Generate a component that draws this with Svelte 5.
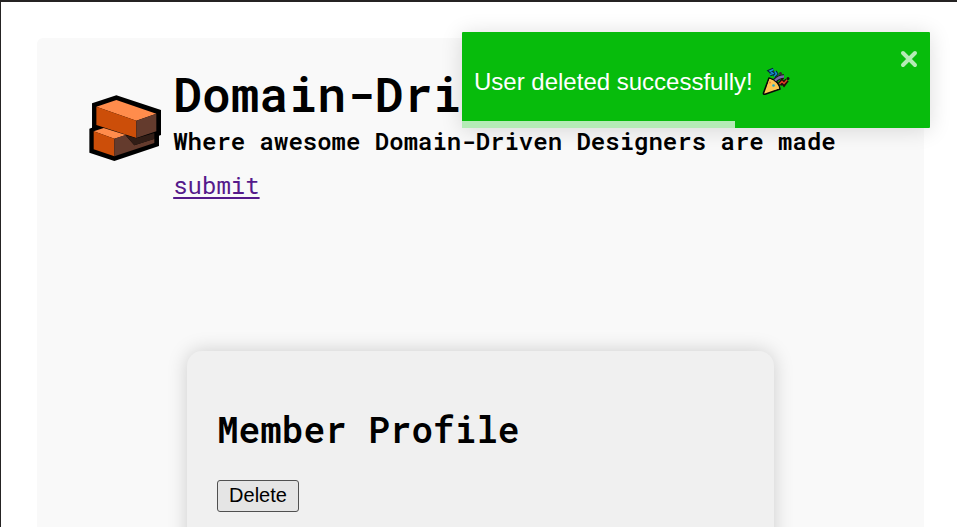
<script>
  let progress = $state(58.3);
  let open = $state(true);
</script>

<div class="page">
  <main class="panel">
    <header>
      <svg class="logo" viewBox="26 29 218 199" aria-hidden="true">
        <path fill="#000" d="M108 30 243 74V149L236 151V182L102 227 27 202V130L35 127V54Z" />
        <path fill="#ff8c4c" d="M48 64 108 44 228 85 168 106Z" />
        <path fill="#cc4e09" d="M48 64 168 106V158L48 119Z" />
        <path fill="#643b2d" d="M168 106 228 85V138L168 158Z" />
        <path fill="#ff8c4c" d="M40 138 70 128 137 149 102 160Z" />
        <path fill="#cc4e09" d="M40 138 102 160V213L40 192Z" />
        <path fill="#643b2d" d="M102 160 135 149 162 180 222 160V173L102 213Z" />
        <path fill="#311d16" d="M135 149 168 159 222 143V161L162 180Z" />
      </svg>
      <div class="titles">
        <h1>Domain-Dri</h1>
        <h3>Where awesome Domain-Driven Designers are made</h3>
        <a href="#submit">submit</a>
      </div>
    </header>

    <section class="card">
      <h2>Member Profile</h2>
      <button class="delete">Delete</button>
    </section>
  </main>

  {#if open}
    <div class="toast" role="alert">
      <div class="message">
        <span>User deleted successfully!</span>
        <svg class="party" viewBox="0 0 30 30" aria-hidden="true">
          <path d="M8 11 2.5 26Q2.2 27.6 4 27.2L19 22Q18 14 8 11Z" fill="#ffc551" stroke="#080808" stroke-width="1.6" stroke-linejoin="round" />
          <path d="M9 7.5 12 6.5 9 4 12.5 2.5M13 9.5 15.5 7 14 4.5" fill="none" stroke="#08243a" stroke-width="3.6" />
          <path d="M9 7.5 12 6.5 9 4 12.5 2.5M13 9.5 15.5 7 14 4.5" fill="none" stroke="#168fce" stroke-width="1.5" />
          <path d="M14 13.5Q18 9.5 23 9.5" fill="none" stroke="#181018" stroke-width="4.6" />
          <path d="M14 13.5Q18 9.5 23 9.5" fill="none" stroke="#7966ad" stroke-width="2.4" />
          <path d="M18.5 17.5 21 14.5 23 17 26 13" fill="none" stroke="#210d0b" stroke-width="4.4" />
          <path d="M18.5 17 21 14.5 23 16.5 26 13" fill="none" stroke="#df3f24" stroke-width="1.5" />
          <path d="M8.5 11.8Q15.5 14 18.2 21.5L12 23 6 20Z" fill="#ffc551" />
          <circle cx="19.5" cy="6.5" r="1.5" fill="#3b2630" />
          <circle cx="27" cy="11.5" r="1.5" fill="#15120c" />
          <circle cx="12.5" cy="18.5" r="1.3" fill="#20a6cf" />
          <circle cx="9" cy="15.5" r="0.9" fill="#f07942" />
        </svg>
      </div>
      <button class="close" aria-label="Close" onclick={() => (open = false)}>
        <svg viewBox="0 0 18 18"><path d="M3 3 15 15M15 3 3 15" /></svg>
      </button>
      <div class="bar" style="width: {progress}%"></div>
    </div>
  {/if}
</div>

<style>
  .page {
    box-sizing: border-box;
    width: 957px;
    height: 527px;
    overflow: hidden;
    position: relative;
    background: #fff;
    border-top: 2px solid #252323;
    border-left: 1px solid #252323;
    padding: 36px 33px 0 36px;
    font-family: "Roboto Mono", "DejaVu Sans Mono", monospace;
    color: #000;
  }
  .panel {
    box-sizing: border-box;
    height: 560px;
    background: #f9f9f9;
    border-radius: 6px;
    padding: 26px 52px 0;
  }
  header {
    display: flex;
    height: 287px;
  }
  .logo {
    width: 72.7px;
    height: 66.3px;
    margin-top: 31px;
    margin-left: -0.3px;
    flex: none;
  }
  .titles {
    margin-left: 11.8px;
    white-space: nowrap;
  }
  h1, h2, h3 {
    margin: 0;
    font-weight: 600;
  }
  h1 {
    font-size: 48px;
    line-height: 60px;
  }
  h3 {
    margin-top: 1px;
    font-size: 24px;
    line-height: 32px;
  }
  a {
    display: inline-block;
    margin-top: 12px;
    font-size: 24px;
    font-weight: 400;
    line-height: 32px;
    color: #551a8b;
    text-decoration-thickness: 2px;
    text-underline-offset: 3px;
  }
  .card {
    box-sizing: border-box;
    width: 587px;
    height: 300px;
    margin-left: 98px;
    padding: 54px 30px 0;
    background: #f0f0f0;
    border-radius: 15px;
    box-shadow: 0 0 20px rgba(0, 0, 0, 0.18);
  }
  h2 {
    font-size: 36px;
    line-height: 48px;
  }
  .delete {
    display: block;
    box-sizing: border-box;
    width: 82px;
    height: 32px;
    margin-top: 27px;
    padding: 0 0 1px;
    border: 1px solid #505050;
    border-radius: 3px;
    background: #e5e5e5;
    color: #000;
    font: 20px "Liberation Sans", Arial, sans-serif;
  }
  .toast {
    position: absolute;
    left: 461px;
    top: 30px;
    width: 468px;
    height: 96px;
    border-radius: 1px;
    background: #07bc0c;
    box-shadow: 0 2px 22px rgba(0, 0, 0, 0.14);
    color: #fff;
    font: 24px "Liberation Sans", Arial, sans-serif;
  }
  .message {
    display: flex;
    align-items: center;
    height: 100px;
    padding-left: 12px;
    white-space: nowrap;
  }
  .party {
    width: 30px;
    height: 30px;
    margin-left: 8px;
  }
  .close {
    position: absolute;
    right: 12px;
    top: 18px;
    width: 18px;
    height: 18px;
    padding: 0;
    border: 0;
    background: none;
  }
  .close svg {
    display: block;
  }
  .close path {
    stroke: #b4ebb6;
    stroke-width: 4;
    stroke-linecap: round;
  }
  .bar {
    position: absolute;
    left: 0;
    bottom: 0;
    height: 7px;
    background: #b4ebb6;
  }
</style>
